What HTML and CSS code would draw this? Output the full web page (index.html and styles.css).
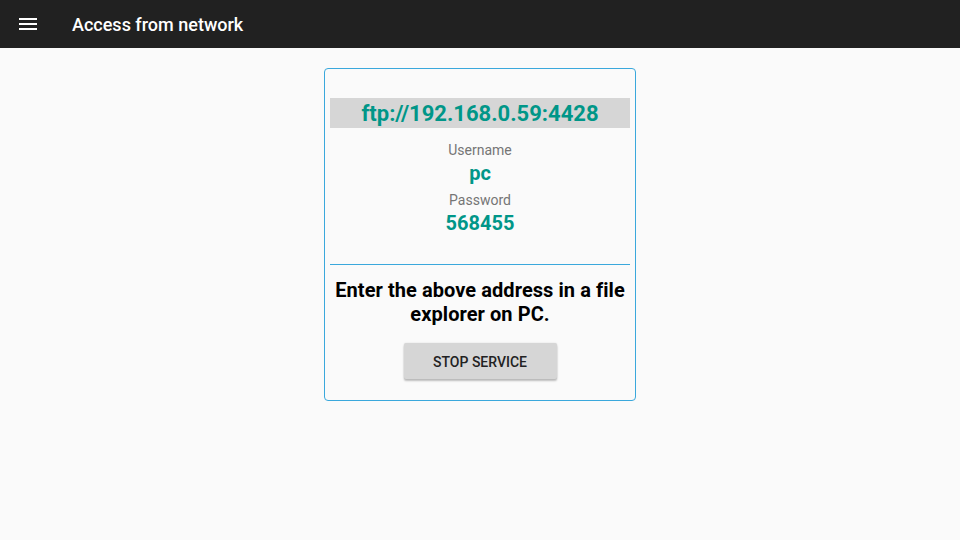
FILE: index.html
```html
<!DOCTYPE html>
<html>
<head>
<meta charset="utf-8">
<link rel="stylesheet" href="styles.css">
</head>
<body>
<header class="toolbar">
  <svg class="menu-icon" width="24" height="24" viewBox="0 0 24 24"><path d="M3 18h18v-2H3v2zm0-5h18v-2H3v2zm0-7v2h18V6H3z" fill="#fff"/></svg>
  <h1 class="title">Access from network</h1>
</header>
<main class="content">
  <section class="card">
    <div class="address">ftp://192.168.0.59:4428</div>
    <div class="label label-first">Username</div>
    <div class="value">pc</div>
    <div class="label">Password</div>
    <div class="value">568455</div>
    <hr class="divider">
    <p class="hint">Enter the above address in a file explorer on PC.</p>
    <button class="stop">STOP SERVICE</button>
  </section>
</main>
</body>
</html>
```
FILE: styles.css
```css
html, body {
  margin: 0;
  padding: 0;
  width: 960px;
  height: 540px;
  background: #fafafa;
  font-family: Roboto, "Noto Sans", sans-serif;
  overflow: hidden;
}
.toolbar {
  height: 48px;
  background: #212121;
  display: flex;
  align-items: center;
  padding-left: 16px;
}
.menu-icon {
  display: block;
}
.title {
  margin: 0 0 0 32px;
  color: #fff;
  font-size: 18px;
  font-weight: 500;
}
.content {
  display: flex;
  justify-content: center;
  padding-top: 20px;
}
.card {
  width: 300px;
  border: 1px solid #3aa8dc;
  border-radius: 4px;
  padding: 29px 5px 21px;
  display: flex;
  flex-direction: column;
  align-items: center;
}
.address {
  align-self: stretch;
  box-sizing: border-box;
  height: 30px;
  padding-top: 1px;
  line-height: 30px;
  background: #d6d6d6;
  color: #009688;
  font-size: 22px;
  font-weight: 700;
  text-align: center;
}
.label {
  color: #757575;
  font-size: 14px;
  line-height: 20px;
  margin-top: 3px;
}
.label-first {
  margin-top: 12px;
}
.value {
  color: #009688;
  font-size: 20px;
  font-weight: 700;
  line-height: 27px;
}
.divider {
  align-self: stretch;
  border: 0;
  height: 1px;
  background: #3aa8dc;
  margin: 27px 0 0;
}
.hint {
  margin: 13px 0 0;
  font-size: 20px;
  font-weight: 700;
  line-height: 24px;
  letter-spacing: 0.07px;
  color: #000;
  text-align: center;
}
.stop {
  margin-top: 17px;
  width: 153px;
  height: 36px;
  padding: 2px 0 0;
  border: 0;
  border-radius: 2px;
  background: #d6d6d6;
  color: #222;
  font-family: Roboto, sans-serif;
  font-size: 14px;
  font-weight: 500;
  box-shadow: 0 2px 2px rgba(0,0,0,0.24), 0 0 2px rgba(0,0,0,0.12);
}
```
